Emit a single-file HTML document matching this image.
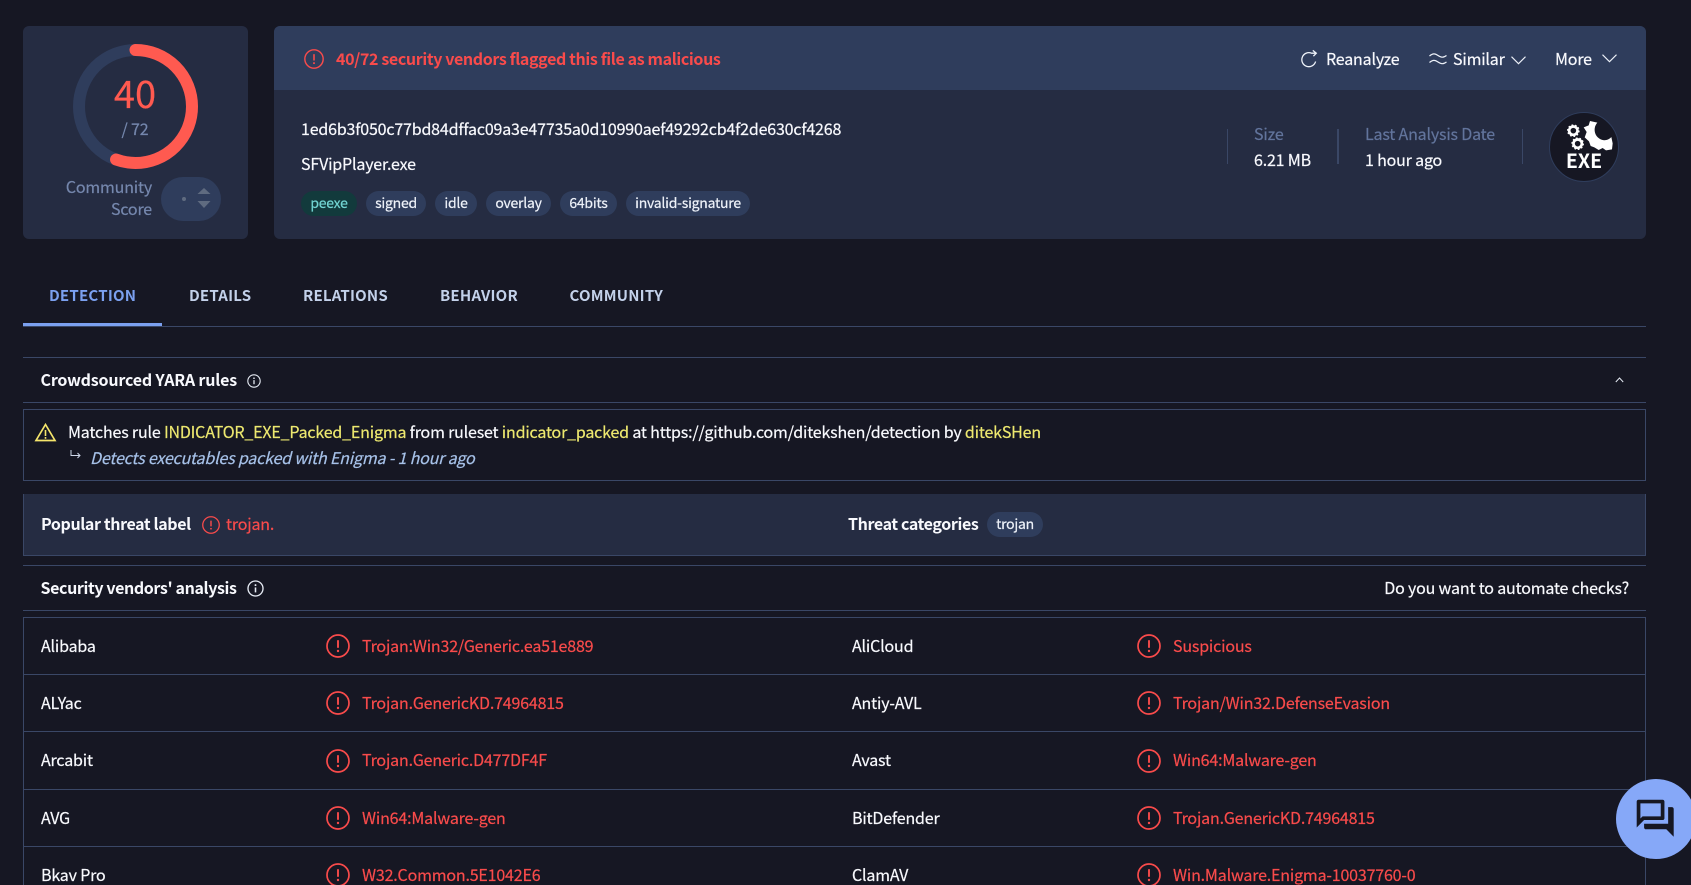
<!DOCTYPE html>
<html><head><meta charset="utf-8"><title>VirusTotal</title>
<style>
*{margin:0;padding:0;box-sizing:border-box}
html,body{width:1691px;height:885px;overflow:hidden;background:#161723}
body{position:relative;font-family:"Noto Sans CJK JP","Liberation Sans",sans-serif;font-size:16px;color:#f8f9fd;letter-spacing:-0.18px;-webkit-text-stroke:0.2px}
.a{position:absolute;white-space:nowrap;line-height:24px;margin-top:-1px}
.b{position:absolute}
.r{color:#f94b4b}
.y{color:#ede86f}
.s{font-weight:700;-webkit-text-stroke:0}
.t{font-weight:700;letter-spacing:-0.38px;-webkit-text-stroke:0}
.tag{position:absolute;top:191px;height:25px;line-height:24px;border-radius:13px;background:#2f3d5c;font-size:14px;text-align:center;color:#eef2f9;letter-spacing:-0.25px}
.tab{position:absolute;top:284px;line-height:24px;font-size:15px;font-weight:700;color:#c3d1ea;white-space:nowrap;-webkit-text-stroke:0;letter-spacing:0.22px}
.hl{position:absolute;height:1px;background:#3a4766;left:23px;width:1623px}
svg{position:absolute;overflow:visible}
</style></head><body>
<svg width="0" height="0" style="position:absolute"><defs>
<symbol id="al" viewBox="0 0 24 24"><circle cx="12" cy="12" r="11" fill="none" stroke="#f94b4b" stroke-width="1.7"/><path d="M12 6.2v7.6" stroke="#f94b4b" stroke-width="1.9" fill="none"/><circle cx="12" cy="17" r="1.2" fill="#f94b4b"/></symbol>
<symbol id="inf" viewBox="0 0 24 24"><circle cx="12" cy="12" r="10.6" fill="none" stroke="#e6ebf4" stroke-width="1.9"/><path d="M12 10.5v7" stroke="#e6ebf4" stroke-width="2.2" fill="none"/><circle cx="12" cy="7.2" r="1.4" fill="#e6ebf4"/></symbol>
</defs></svg>

<!-- score card -->
<div class="b" style="left:23px;top:26px;width:225px;height:213px;background:#252c42;border-radius:6px"></div>
<svg style="left:70px;top:40px" width="132" height="132" viewBox="0 0 132 132">
<circle cx="65.5" cy="66.5" r="56.5" fill="none" stroke="#2f3d5c" stroke-width="12"/>
<circle cx="65.5" cy="66.5" r="56.5" fill="none" stroke="#ff5a50" stroke-width="12" stroke-linecap="round" stroke-dasharray="197.2 400" transform="rotate(-90 65.5 66.5)"/>
</svg>
<div class="a" style="left:85px;width:100px;top:69px;line-height:48px;font-size:38px;text-align:center;color:#ff5a50;letter-spacing:0">40</div>
<div class="a" style="left:85px;width:100px;top:117px;text-align:center;color:#7587ad;font-size:16px">/ 72</div>
<div class="a" style="left:42px;width:110px;top:175px;text-align:right;color:#7587ad">Community</div>
<div class="a" style="left:42px;width:110px;top:197px;text-align:right;color:#7587ad">Score</div>
<div class="b" style="left:161px;top:177px;width:60px;height:44px;border-radius:22px;background:#2f3d5c"></div>
<div class="b" style="left:182px;top:197px;width:4px;height:4px;border-radius:50%;background:#5f6b80"></div>
<svg style="left:197px;top:187px" width="14" height="24"><path d="M0.5 7 L7 1 L13.5 7Z M0.5 14 L13.5 14 L7 21Z" fill="#5f6b80"/></svg>

<!-- main card -->
<div class="b" style="left:274px;top:26px;width:1372px;height:213px;background:#252c42;border-radius:6px"></div>
<div class="b" style="left:274px;top:26px;width:1372px;height:64px;background:#2f3d5c;border-radius:6px 6px 0 0"></div>
<svg style="left:304px;top:49px" width="20" height="20"><use href="#al" width="20" height="20"/></svg>
<div class="a t r" style="left:336px;top:47px;letter-spacing:-0.37px">40/72 security vendors flagged this file as malicious</div>

<svg style="left:1301px;top:50px" width="17" height="18" viewBox="0 0 17 18" fill="none" stroke="#eef2f9" stroke-width="1.3"><path d="M14.6 11.5A7 7 0 1 1 10.5 3.2H15"/><path d="M11.8 0.4 L15.3 3.2 L12.4 6.2"/></svg>
<div class="a" style="left:1326px;top:47px">Reanalyze</div>
<svg style="left:1429px;top:52px" width="18" height="14" viewBox="0 0 18 14" fill="none" stroke="#eef2f9" stroke-width="1.2"><path d="M0.5 4C4 1 6 1.500 9 3.500S14 6 17.500 3.500"/><path d="M0.5 10.500C4 7.500 6 8 9 10S14 12.500 17.500 10"/></svg>
<div class="a" style="left:1453px;top:47px">Similar</div>
<svg style="left:1511px;top:56px" width="15" height="9" fill="none" stroke="#eef2f9" stroke-width="1.1"><path d="M0.500 0.700L7.500 7.700L14.500 0.700"/></svg>
<div class="a" style="left:1555px;top:47px">More</div>
<svg style="left:1602px;top:54px" width="15" height="9" fill="none" stroke="#eef2f9" stroke-width="1.1"><path d="M0.500 0.700L7.500 7.700L14.500 0.700"/></svg>

<div class="a" style="left:301px;top:117px">1ed6b3f050c77bd84dffac09a3e47735a0d10990aef49292cb4f2de630cf4268</div>
<div class="a" style="left:301px;top:152px">SFVipPlayer.exe</div>
<div class="tag" style="left:301px;width:56px;background:#123a3c;color:#72d4d2">peexe</div>
<div class="tag" style="left:366px;width:60px">signed</div>
<div class="tag" style="left:435px;width:42px">idle</div>
<div class="tag" style="left:486px;width:65px">overlay</div>
<div class="tag" style="left:560px;width:57px">64bits</div>
<div class="tag" style="left:626px;width:124px">invalid-signature</div>

<div class="b" style="left:1227px;top:129px;width:1px;height:35px;background:#3a4766"></div>
<div class="b" style="left:1337px;top:129px;width:2px;height:35px;background:#3a4766"></div>
<div class="b" style="left:1522px;top:129px;width:1px;height:35px;background:#3a4766"></div>
<div class="a" style="left:1254px;top:122px;color:#62749c">Size</div>
<div class="a" style="left:1254px;top:148px">6.21 MB</div>
<div class="a" style="left:1365px;top:122px;color:#62749c">Last Analysis Date</div>
<div class="a" style="left:1365px;top:148px">1 hour ago</div>
<div class="b" style="left:1549px;top:112px;width:70px;height:70px;border-radius:50%;background:#161723;border:1px solid #2f3d5c"></div>
<svg style="left:1540px;top:100px" width="100" height="90" viewBox="0 0 300 270">
<circle cx="100" cy="92" r="12.500" fill="none" stroke="#fff" stroke-width="8"/><circle cx="100" cy="92" r="17" fill="none" stroke="#fff" stroke-width="4" stroke-dasharray="5 5.600"/>
<circle cx="113" cy="131" r="12.500" fill="none" stroke="#fff" stroke-width="8"/><circle cx="113" cy="131" r="17" fill="none" stroke="#fff" stroke-width="4" stroke-dasharray="5 5.600"/>
<path d="M150 63L172 68C158 84 163 108 180 117C192 124 206 120 214 111L218 130L216 148L198 151L188 144L176 150L163 142L152 138L147 124L134 112L140 96L131 82L146 76Z" fill="#fff"/>
</svg>
<div class="a s" style="left:1549px;width:70px;top:149px;text-align:center;font-size:19.500px;color:#fff;letter-spacing:0">EXE</div>

<!-- tabs -->
<div class="tab" style="left:49px;color:#7ba0ef">DETECTION</div>
<div class="tab" style="left:189px">DETAILS</div>
<div class="tab" style="left:303px">RELATIONS</div>
<div class="tab" style="left:440px">BEHAVIOR</div>
<div class="tab" style="left:569.500px">COMMUNITY</div>
<div class="hl" style="top:326px"></div>
<div class="b" style="left:23px;top:323px;width:139px;height:3px;background:#7ba0ef"></div>

<!-- YARA -->
<div class="hl" style="top:357px"></div>
<div class="a s" style="left:40.500px;top:368px">Crowdsourced YARA rules</div>
<svg style="left:247px;top:374px" width="14" height="14"><use href="#inf" width="14" height="14"/></svg>
<svg style="left:1615px;top:377px" width="9" height="6" fill="none" stroke="#e6ebf4" stroke-width="1"><path d="M0.800 5L4.500 1L8.200 5"/></svg>
<div class="hl" style="top:402px"></div>
<div class="b" style="left:23px;top:409px;width:1623px;height:72px;border:1px solid #3a4766"></div>
<svg style="left:35px;top:423px" width="21" height="19" fill="none" stroke="#f5e56b" stroke-width="1.700"><path d="M10.500 1.500L20 17.500H1Z"/><path d="M10.500 7v6" stroke-width="1.600"/><path d="M10.500 14v1.800" stroke-width="1.600"/></svg>
<div class="a" style="left:68px;top:420px">Matches rule <span class="y">INDICATOR_EXE_Packed_Enigma</span> from ruleset <span class="y">indicator_packed</span> at https://github.com/ditekshen/detection by <span class="y">ditekSHen</span></div>
<svg style="left:70px;top:450px" width="11" height="9" fill="none" stroke="#cfd8ea" stroke-width="1"><path d="M1 0V5.500H10M7.500 3L10 5.500L7.500 8"/></svg>
<div class="a" style="left:90px;top:446px;font-style:italic;color:#a6c1e8">Detects executables packed with Enigma - 1 hour ago</div>

<!-- threat bar -->
<div class="b" style="left:23px;top:494px;width:1623px;height:62px;background:#252c42;border:solid #3a4766;border-width:0 1px 1px 1px"></div>
<div class="a t" style="left:41px;top:512px">Popular threat label</div>
<svg style="left:202px;top:516px" width="18" height="18"><use href="#al" width="18" height="18"/></svg>
<div class="a r" style="left:226px;top:512px">trojan.</div>
<div class="a t" style="left:848px;top:512px">Threat categories</div>
<div class="tag" style="left:987px;width:56px;top:512px">trojan</div>

<!-- vendors -->
<div class="hl" style="top:565px"></div>
<div class="a t" style="left:40.500px;top:576px">Security vendors' analysis</div>
<svg style="left:247px;top:580px" width="17" height="17"><use href="#inf" width="17" height="17"/></svg>
<div class="a" style="right:62px;top:576px">Do you want to automate checks?</div>
<div class="hl" style="top:610px"></div>
<div class="b" style="left:23px;top:617px;width:1623px;height:268px;border:solid #3a4766;border-width:1px 1px 0 1px"></div>
<div class="hl" style="top:674px"></div>
<div class="hl" style="top:731px"></div>
<div class="hl" style="top:789px"></div>
<div class="hl" style="top:846px"></div>

<div class="a" style="left:41px;top:634px">Alibaba</div>
<svg style="left:326px;top:634px" width="24" height="24"><use href="#al" width="24" height="24"/></svg>
<div class="a r" style="left:362px;top:634px">Trojan:Win32/Generic.ea51e889</div>
<div class="a" style="left:852px;top:634px">AliCloud</div>
<svg style="left:1137px;top:634px" width="24" height="24"><use href="#al" width="24" height="24"/></svg>
<div class="a r" style="left:1173px;top:634px">Suspicious</div>

<div class="a" style="left:41px;top:691px">ALYac</div>
<svg style="left:326px;top:691px" width="24" height="24"><use href="#al" width="24" height="24"/></svg>
<div class="a r" style="left:362px;top:691px">Trojan.GenericKD.74964815</div>
<div class="a" style="left:852px;top:691px">Antiy-AVL</div>
<svg style="left:1137px;top:691px" width="24" height="24"><use href="#al" width="24" height="24"/></svg>
<div class="a r" style="left:1173px;top:691px">Trojan/Win32.DefenseEvasion</div>

<div class="a" style="left:41px;top:748px">Arcabit</div>
<svg style="left:326px;top:749px" width="24" height="24"><use href="#al" width="24" height="24"/></svg>
<div class="a r" style="left:362px;top:748px">Trojan.Generic.D477DF4F</div>
<div class="a" style="left:852px;top:748px">Avast</div>
<svg style="left:1137px;top:749px" width="24" height="24"><use href="#al" width="24" height="24"/></svg>
<div class="a r" style="left:1173px;top:748px">Win64:Malware-gen</div>

<div class="a" style="left:41px;top:806px">AVG</div>
<svg style="left:326px;top:806px" width="24" height="24"><use href="#al" width="24" height="24"/></svg>
<div class="a r" style="left:362px;top:806px">Win64:Malware-gen</div>
<div class="a" style="left:852px;top:806px">BitDefender</div>
<svg style="left:1137px;top:806px" width="24" height="24"><use href="#al" width="24" height="24"/></svg>
<div class="a r" style="left:1173px;top:806px">Trojan.GenericKD.74964815</div>

<div class="a" style="left:41px;top:863px">Bkav Pro</div>
<svg style="left:326px;top:863px" width="24" height="24"><use href="#al" width="24" height="24"/></svg>
<div class="a r" style="left:362px;top:863px">W32.Common.5E1042E6</div>
<div class="a" style="left:852px;top:863px">ClamAV</div>
<svg style="left:1137px;top:863px" width="24" height="24"><use href="#al" width="24" height="24"/></svg>
<div class="a r" style="left:1173px;top:863px">Win.Malware.Enigma-10037760-0</div>

<!-- chat -->
<div class="b" style="left:1616px;top:779px;width:80px;height:80px;border-radius:50%;background:#86a8f8"></div>
<svg style="left:1633.300px;top:796.300px" width="44.400" height="44.400" viewBox="0 0 24 24"><path fill="#161723" d="M15 4v7H5.170L4 12.170V4h11m1-2H3c-.55 0-1 .45-1 1v14l4-4h10c.55 0 1-.45 1-1V3c0-.55-.45-1-1-1zm5 4h-2v9H6v2c0 .55.45 1 1 1h11l4 4V7c0-.55-.45-1-1-1z"/></svg>
</body></html>
